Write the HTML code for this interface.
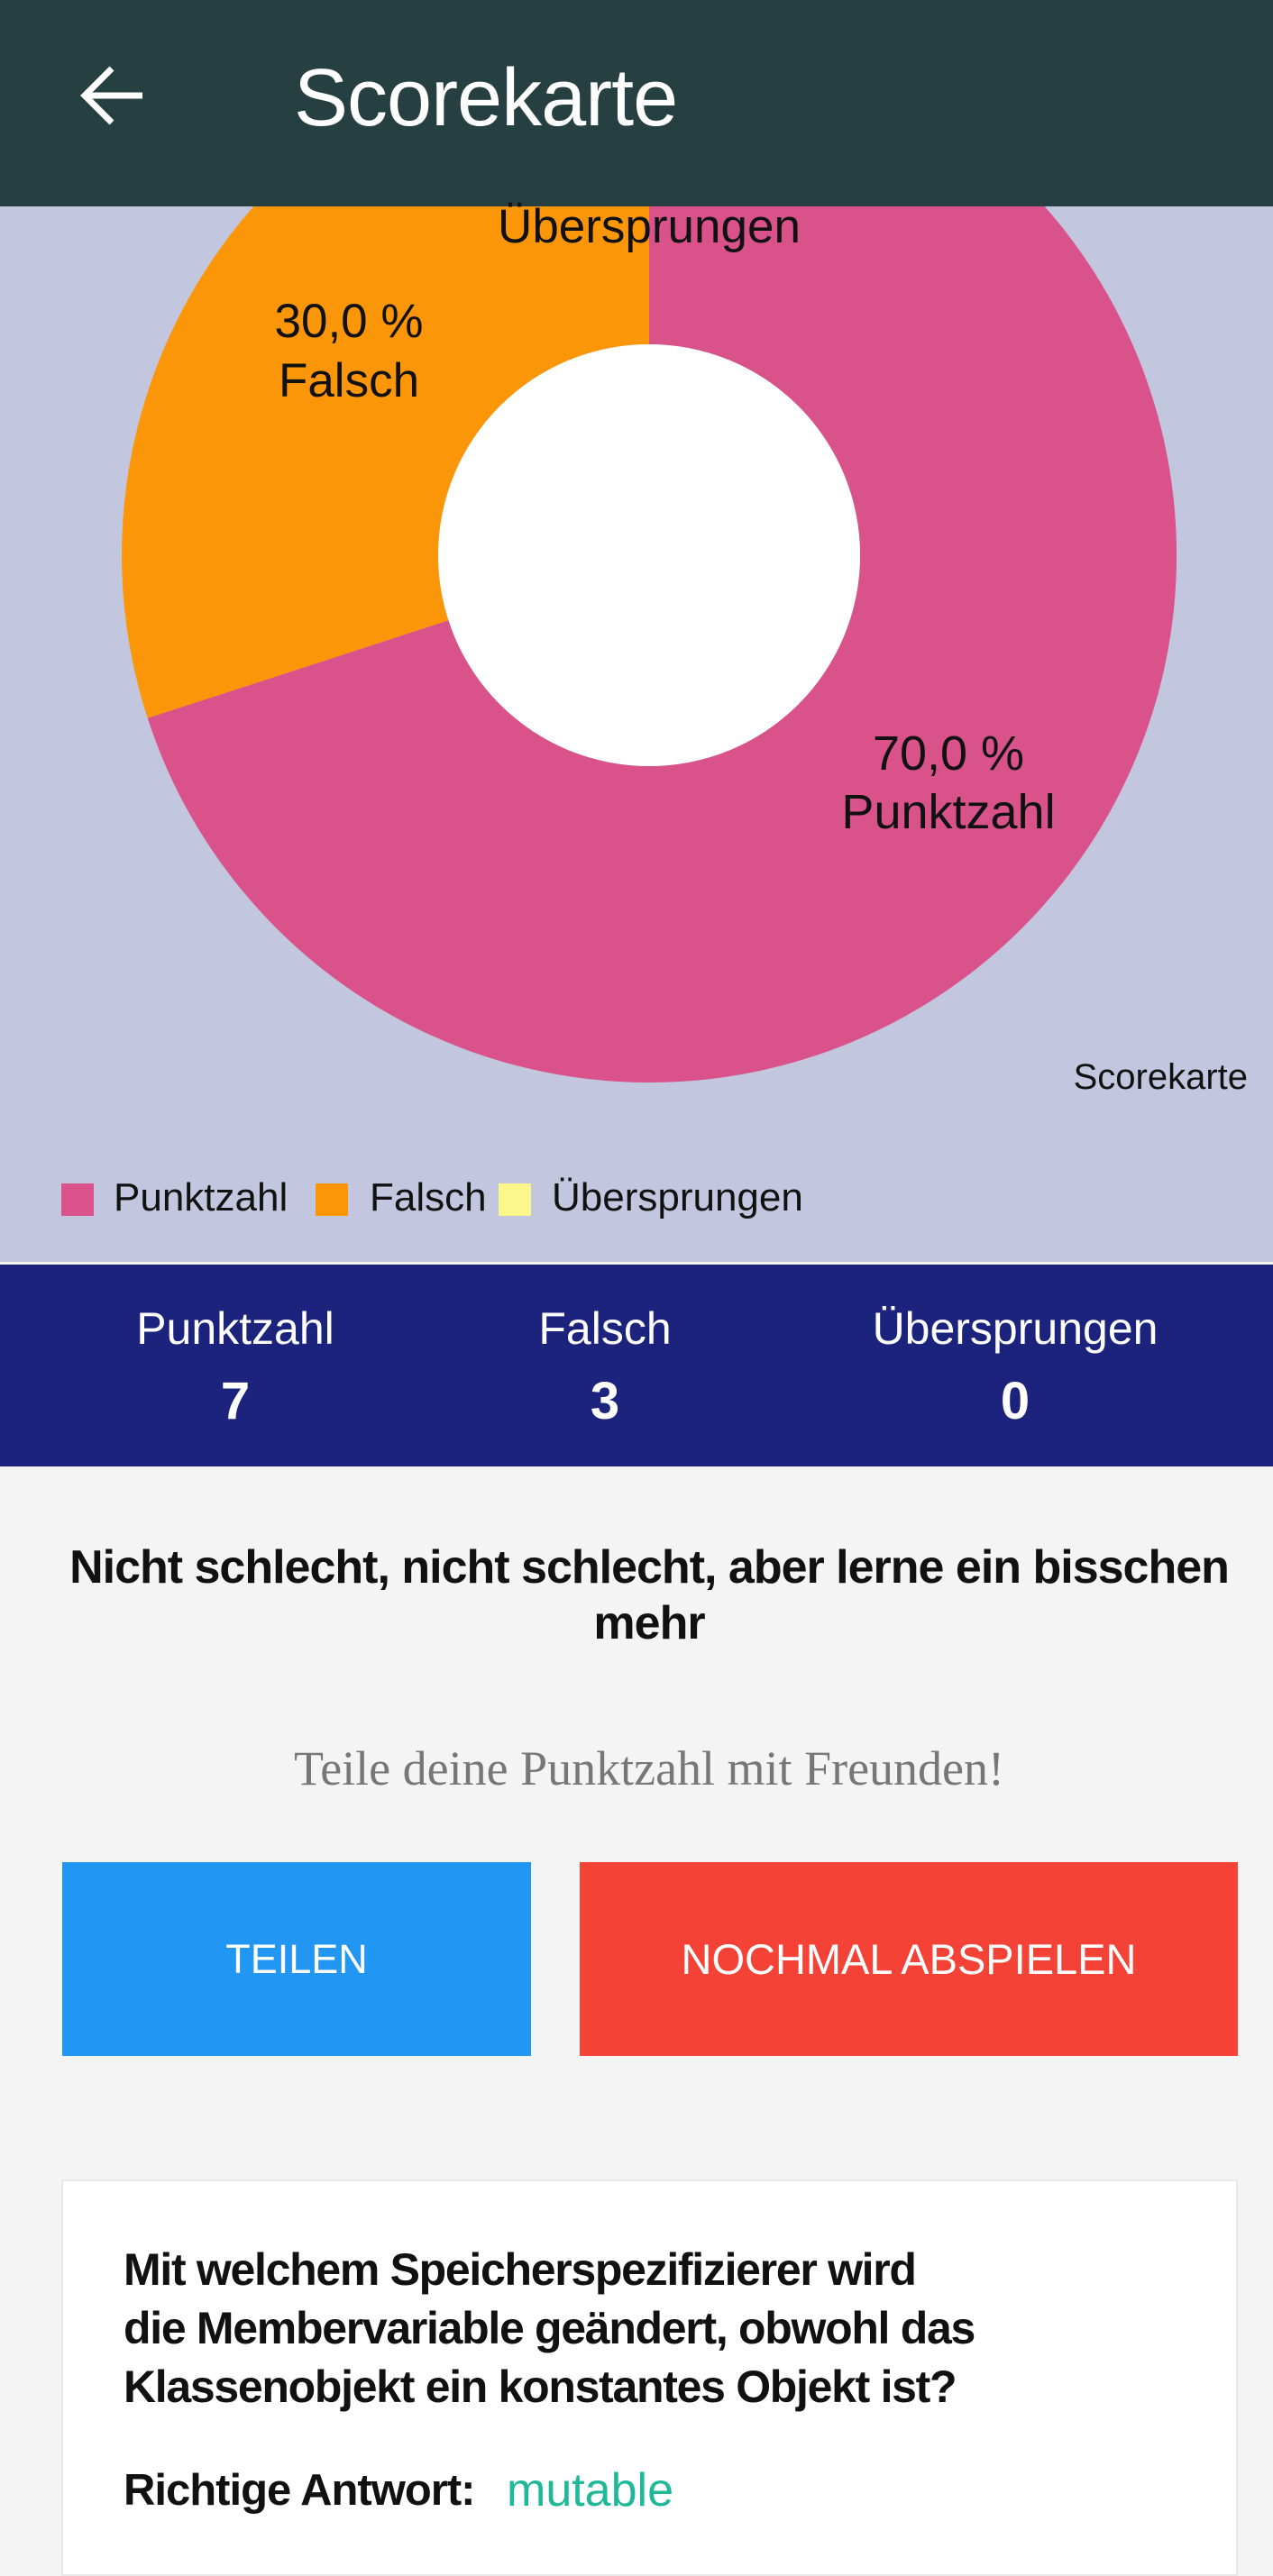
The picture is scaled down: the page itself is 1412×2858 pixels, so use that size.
<!DOCTYPE html>
<html><head><meta charset="utf-8"><style>
*{margin:0;padding:0;box-sizing:border-box}
body{width:1412px;height:2832px;background:#f5f4f5;font-family:"Liberation Sans",sans-serif;position:relative;overflow:hidden}
.a{position:absolute;white-space:nowrap;line-height:1}
.c{transform:translateX(-50%)}
</style></head><body>
<div class="a" style="left:0;top:0;width:1412px;height:1400px;background:#c2c7df"></div>
<svg class="a" style="left:0;top:0" width="1412" height="1400">
<path d="M720 31 A585 585 0 1 1 163.7 796.8 L497.5 688.3 A234 234 0 1 0 720 382 Z" fill="#d9528a"/>
<path d="M163.7 796.8 A585 585 0 0 1 720 31 L720 382 A234 234 0 0 0 497.5 688.3 Z" fill="#fb9609"/>
<circle cx="720" cy="616" r="234" fill="#fff"/>
</svg>
<div class="a" style="left:0;top:0;width:1412px;height:229px;background:#263f40"></div>
<svg class="a" style="left:88px;top:70px" width="76" height="72" viewBox="0 0 76 72"><path d="M70 36 H8 M36 6 L6 36 L36 66" stroke="#fff" stroke-width="7" fill="none"/></svg>
<div class="a" style="left:326px;top:64px;font-size:90px;color:#fff;letter-spacing:-1px">Scorekarte</div>
<div class="a c" style="left:720px;top:225px;font-size:53px;color:#111">Übersprungen</div>
<div class="a c" style="left:387px;top:324px;font-size:53px;line-height:66px;text-align:center;color:#111">30,0 %<br>Falsch</div>
<div class="a c" style="left:1052px;top:804px;font-size:54px;line-height:65px;text-align:center;color:#111">70,0 %<br>Punktzahl</div>
<div class="a" style="right:28px;top:1175px;font-size:40px;color:#111">Scorekarte</div>
<div class="a" style="left:68px;top:1313px;width:36px;height:36px;background:#d9528a"></div>
<div class="a" style="left:126px;top:1307px;font-size:44px;color:#111">Punktzahl</div>
<div class="a" style="left:350px;top:1313px;width:36px;height:36px;background:#fb9609"></div>
<div class="a" style="left:410px;top:1307px;font-size:44px;color:#111">Falsch</div>
<div class="a" style="left:553px;top:1313px;width:36px;height:36px;background:#fbf78a"></div>
<div class="a" style="left:612px;top:1307px;font-size:44px;color:#111">Übersprungen</div>
<div class="a" style="left:0;top:1403px;width:1412px;height:224px;background:#1b237c"></div>
<div class="a c" style="left:261px;top:1449px;font-size:50px;color:#fff">Punktzahl</div>
<div class="a c" style="left:671px;top:1449px;font-size:50px;color:#fff">Falsch</div>
<div class="a c" style="left:1126px;top:1449px;font-size:50px;color:#fff">Übersprungen</div>
<div class="a c" style="left:261px;top:1526px;font-size:58px;font-weight:bold;color:#fff">7</div>
<div class="a c" style="left:671px;top:1526px;font-size:58px;font-weight:bold;color:#fff">3</div>
<div class="a c" style="left:1126px;top:1526px;font-size:58px;font-weight:bold;color:#fff">0</div>
<div class="a" style="left:0;top:1708px;width:1440px;text-align:center;font-size:52px;line-height:62px;font-weight:bold;color:#111;letter-spacing:-1px">Nicht schlecht, nicht schlecht, aber lerne ein bisschen<br>mehr</div>
<div class="a" style="left:0;top:1935px;width:1440px;text-align:center;font-family:'Liberation Serif',serif;font-size:54px;color:#777">Teile deine Punktzahl mit Freunden!</div>
<div class="a" style="left:69px;top:2066px;width:520px;height:215px;background:#2196f3;color:#fff;font-size:45px;text-align:center;line-height:215px">TEILEN</div>
<div class="a" style="left:643px;top:2066px;width:730px;height:215px;background:#f44336;color:#fff;font-size:47px;text-align:center;line-height:215px">NOCHMAL ABSPIELEN</div>
<div class="a" style="left:68px;top:2418px;width:1305px;height:440px;background:#fff;border:2px solid #e8e8e8"></div>
<div class="a" style="left:137px;top:2486px;font-size:50px;line-height:65px;font-weight:bold;color:#111;letter-spacing:-1.3px">Mit welchem Speicherspezifizierer wird<br>die Membervariable geändert, obwohl das<br>Klassenobjekt ein konstantes Objekt ist?</div>
<div class="a" style="left:137px;top:2739px;font-size:49px;font-weight:bold;color:#111;letter-spacing:-1px">Richtige Antwort:</div>
<div class="a" style="left:562px;top:2737px;font-size:52px;color:#1fb99a">mutable</div>
</body></html>
